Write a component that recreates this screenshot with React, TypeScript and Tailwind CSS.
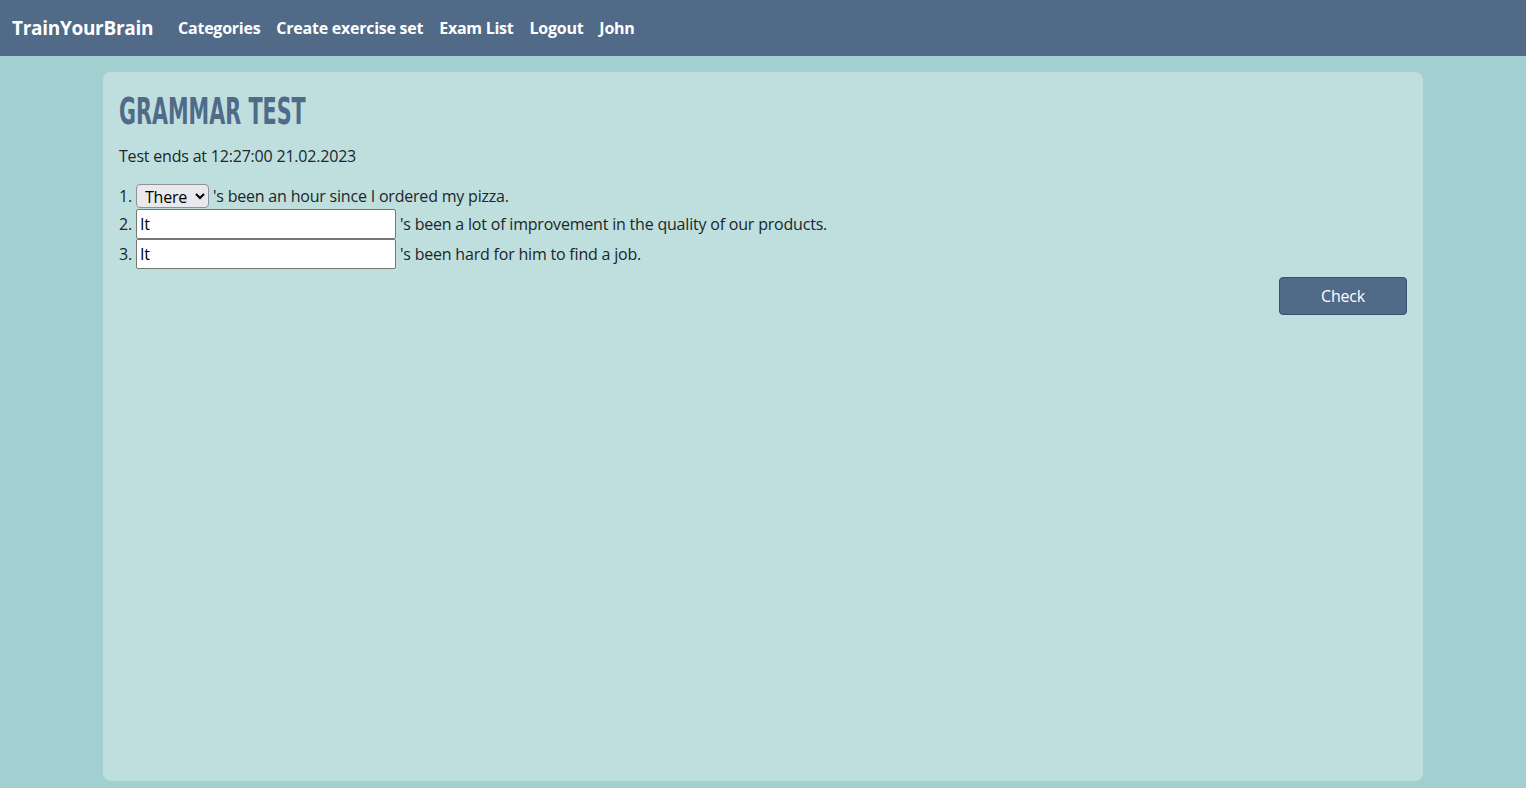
import React from "react";

export default function App() {
  const font = "font-['Open_Sans','Noto_Sans',sans-serif]";
  return (
    <div className={`min-h-[788px] bg-[#a2cfcf] text-[#212529] ${font}`}>
      <nav className="h-14 bg-[#506a88] flex items-center px-3 text-white">
        <span className="text-[19px] font-bold tracking-[-0.3px] mr-[25px]">TrainYourBrain</span>
        <div className="flex items-center gap-4 text-base font-bold tracking-[-0.25px]">
          <span>Categories</span>
          <span>Create exercise set</span>
          <span>Exam List</span>
          <span>Logout</span>
          <span>John</span>
        </div>
      </nav>
      <div className="pt-4">
        <div className="mx-auto w-[1320px] h-[709px] bg-[#bedfdd] rounded-lg p-4 tracking-[-0.2px]">
          <h1 className="h-[45px] flex items-center overflow-visible tracking-normal">
            <span className="inline-block origin-left scale-x-[0.545] font-['DejaVu_Sans',sans-serif] font-bold text-[38px] leading-none text-[#506a88] whitespace-nowrap">
              GRAMMAR TEST
            </span>
          </h1>
          <p className="mt-[11px] text-base leading-6">Test ends at 12:27:00 21.02.2023</p>
          <div className="mt-[15px] text-base">
            <div className="h-[26px] flex items-center">
              <span className="mr-1">1.</span>
              <select
                defaultValue="There"
                className={`h-6 px-1 rounded border border-[#8f8f9d] bg-[#e9e9ed] text-base text-black ${font}`}
              >
                <option>There</option>
                <option>It</option>
              </select>
              <span className="ml-1">'s been an hour since I ordered my pizza.</span>
            </div>
            <div className="h-[30px] flex items-center">
              <span className="mr-1">2.</span>
              <input
                defaultValue="It"
                className={`w-[260px] h-[30px] px-[3px] bg-white border border-[#767676] rounded-[2px] text-base text-black ${font}`}
              />
              <span className="ml-1">'s been a lot of improvement in the quality of our products.</span>
            </div>
            <div className="h-[30px] flex items-center">
              <span className="mr-1">3.</span>
              <input
                defaultValue="It"
                className={`w-[260px] h-[30px] px-[3px] bg-white border border-[#767676] rounded-[2px] text-base text-black ${font}`}
              />
              <span className="ml-1">'s been hard for him to find a job.</span>
            </div>
          </div>
          <div className="flex justify-end mt-2">
            <button className="w-32 h-[38px] bg-[#506a88] border border-[#3b5170] rounded text-white text-base">
              Check
            </button>
          </div>
        </div>
      </div>
    </div>
  );
}
